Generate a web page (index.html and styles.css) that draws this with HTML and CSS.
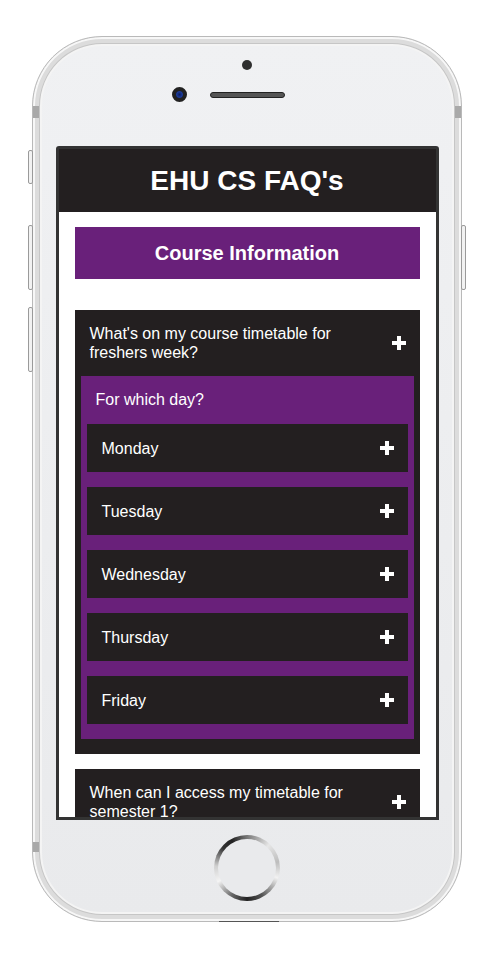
FILE: index.html
```html
<!DOCTYPE html>
<html lang="en">
<head>
<meta charset="UTF-8">
<meta name="viewport" content="width=device-width, initial-scale=1.0">
<title>EHU CS FAQ's</title>
<link rel="stylesheet" href="styles.css">
</head>
<body>
  <div class="phone">
    <span class="side-btn mute"></span>
    <span class="side-btn vol-up"></span>
    <span class="side-btn vol-down"></span>
    <span class="side-btn power"></span>
    <span class="band band-left"></span>
    <span class="band band-right"></span>
    <span class="band band-low"></span>
    <span class="bottom-tab"></span>

    <div class="phone-top">
      <span class="sensor"></span>
      <div class="cam-row">
        <span class="camera"></span>
        <span class="speaker"></span>
        <span class="cam-spacer"></span>
      </div>
    </div>

    <div class="screen">
      <header class="app-header">
        <h1>EHU CS FAQ's</h1>
      </header>
      <main class="content">
        <h2 class="section-title">Course Information</h2>

        <div class="faq">
          <div class="faq-q">
            <span class="faq-text">What's on my course timetable for freshers week?</span>
            <svg class="plus" width="14" height="14" viewBox="0 0 14 14"><rect x="5" y="0" width="4" height="14" fill="#fff"/><rect x="0" y="5" width="14" height="4" fill="#fff"/></svg>
          </div>
          <div class="answer">
            <div class="answer-label">For which day?</div>
            <div class="day">Monday<svg class="plus" width="14" height="14" viewBox="0 0 14 14"><rect x="5" y="0" width="4" height="14" fill="#fff"/><rect x="0" y="5" width="14" height="4" fill="#fff"/></svg></div>
            <div class="day">Tuesday<svg class="plus" width="14" height="14" viewBox="0 0 14 14"><rect x="5" y="0" width="4" height="14" fill="#fff"/><rect x="0" y="5" width="14" height="4" fill="#fff"/></svg></div>
            <div class="day">Wednesday<svg class="plus" width="14" height="14" viewBox="0 0 14 14"><rect x="5" y="0" width="4" height="14" fill="#fff"/><rect x="0" y="5" width="14" height="4" fill="#fff"/></svg></div>
            <div class="day">Thursday<svg class="plus" width="14" height="14" viewBox="0 0 14 14"><rect x="5" y="0" width="4" height="14" fill="#fff"/><rect x="0" y="5" width="14" height="4" fill="#fff"/></svg></div>
            <div class="day">Friday<svg class="plus" width="14" height="14" viewBox="0 0 14 14"><rect x="5" y="0" width="4" height="14" fill="#fff"/><rect x="0" y="5" width="14" height="4" fill="#fff"/></svg></div>
          </div>
        </div>

        <div class="faq">
          <div class="faq-q">
            <span class="faq-text">When can I access my timetable for semester 1?</span>
            <svg class="plus" width="14" height="14" viewBox="0 0 14 14"><rect x="5" y="0" width="4" height="14" fill="#fff"/><rect x="0" y="5" width="14" height="4" fill="#fff"/></svg>
          </div>
        </div>
      </main>
    </div>

    <div class="phone-bottom">
      <div class="home"><div class="home-face"></div></div>
    </div>
  </div>
</body>
</html>
```

FILE: styles.css
```css
body {
  margin: 0;
  background: #fff;
  font-family: "Liberation Sans", Arial, sans-serif;
}
.phone {
  position: relative;
  box-sizing: border-box;
  width: 430px;
  height: 886px;
  margin: 36px 0 0 32px;
  border: 1px solid #b9b9b9;
  border-radius: 70px;
  background: linear-gradient(#f0f1f3, #e9eaec);
  box-shadow: inset 0 0 0 2px #f7f7f7, inset 0 0 0 6px #dcdcdc, inset 0 0 0 7px #c6c6c6, inset 0 0 0 9px #f4f4f4;
  display: flex;
  flex-direction: column;
  align-items: center;
}
.side-btn {
  position: absolute;
  width: 3px;
  background: #f2f2f2;
  border: 1px solid #9a9a9a;
  border-radius: 2px;
}
.mute { left: -5px; top: 113px; height: 32px; }
.vol-up { left: -5px; top: 188px; height: 63px; }
.vol-down { left: -5px; top: 270px; height: 63px; }
.power { right: -5px; top: 188px; height: 63px; }
.band {
  position: absolute;
  width: 6px;
  height: 12px;
  background: #a9a9a9;
}
.band-left { left: 0; top: 69px; }
.band-right { right: 0; top: 69px; }
.band-low { left: 0; top: 805px; height: 10px; }
.bottom-tab {
  position: absolute;
  bottom: -3px;
  left: 186px;
  width: 60px;
  height: 3px;
  border-radius: 0 0 3px 3px;
  background: #555;
}

.phone-top {
  height: 109px;
  display: flex;
  flex-direction: column;
  align-items: center;
}
.sensor {
  width: 10px;
  height: 10px;
  margin-top: 23px;
  border-radius: 50%;
  background: #2f2f2f;
}
.cam-row {
  display: flex;
  align-items: center;
  gap: 23px;
  margin-top: 17px;
}
.camera {
  box-sizing: border-box;
  width: 15px;
  height: 15px;
  border-radius: 50%;
  border: 4px solid #222;
  background: radial-gradient(#0b1f66, #1e3c9a 60%, #0d1a44);
}
.speaker {
  box-sizing: border-box;
  width: 75px;
  height: 6px;
  border-radius: 3px;
  border: 1px solid #222;
  background: #555;
}
.cam-spacer { width: 15px; }

.screen {
  box-sizing: border-box;
  width: 383px;
  height: 674px;
  border: 3px solid #333;
  border-radius: 3px 3px 0 0;
  overflow: hidden;
  background: #fff;
  flex-shrink: 0;
}
.app-header {
  height: 63px;
  background: #231f20;
}
.app-header h1 {
  margin: 0;
  color: #fff;
  font-size: 28px;
  line-height: 63px;
  text-align: center;
}
.content {
  padding: 15px 16px;
}
.section-title {
  margin: 0 0 31px;
  height: 52px;
  background: #69207a;
  color: #fff;
  font-size: 20px;
  line-height: 52px;
  text-align: center;
}
.faq {
  background: #231f20;
  padding: 0 6px 15px;
  margin-bottom: 15px;
  color: #fff;
  font-size: 16px;
  line-height: 19px;
}
.faq-q {
  display: flex;
  align-items: center;
  gap: 20px;
  padding: 14px 8px 14px 9px;
}
.faq-text { flex: 1; }
.plus { flex-shrink: 0; }
.answer {
  background: #69207a;
  padding: 0 6px 15px;
}
.answer-label {
  padding: 14px 9px 15px;
}
.day {
  display: flex;
  align-items: center;
  justify-content: space-between;
  height: 48px;
  padding: 0 14px 0 15px;
  margin-bottom: 15px;
  background: #231f20;
}
.day:last-child { margin-bottom: 0; }

.phone-bottom {
  flex: 1;
  display: flex;
  justify-content: center;
}
.home {
  box-sizing: border-box;
  width: 66px;
  height: 66px;
  margin-top: 15px;
  padding: 4px;
  border-radius: 50%;
  background: conic-gradient(#777, #e6e6e6 12%, #bdbdbd 22%, #f2f2f2 30%, #555 42%, #222 50%, #666 58%, #f4f4f4 68%, #d0d0d0 76%, #333 86%, #222 92%, #777);
}
.home-face {
  width: 100%;
  height: 100%;
  border-radius: 50%;
  background: #e9eaec;
}
```
